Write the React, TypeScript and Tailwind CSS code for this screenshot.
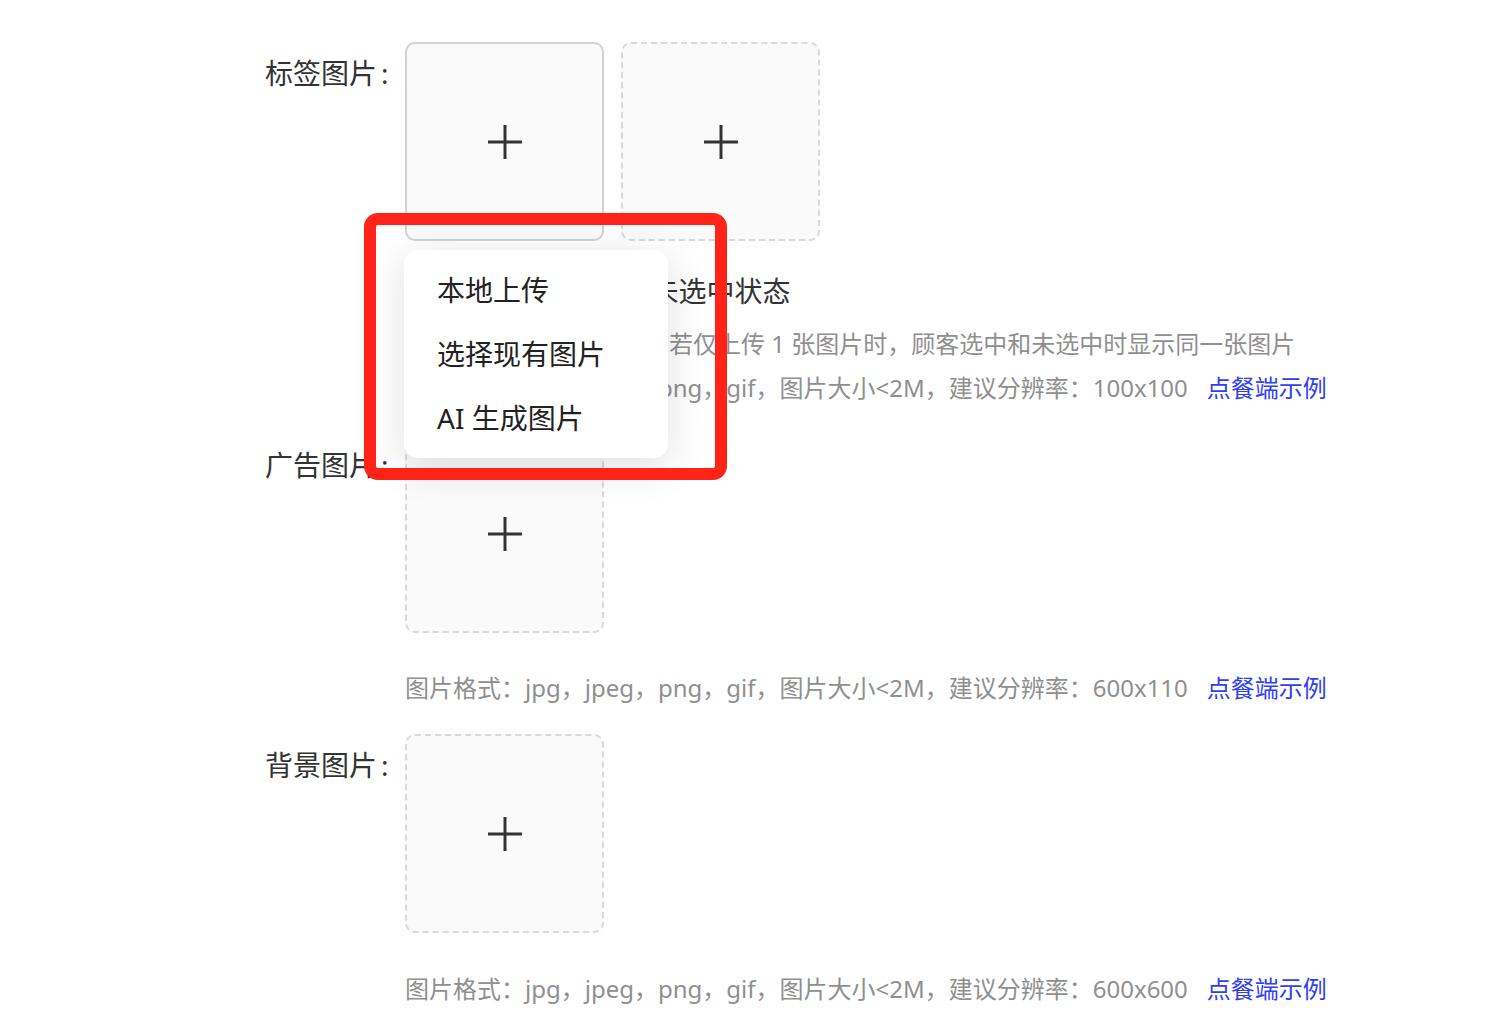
import { useState } from 'react'

const fontStack = "font-['Noto_Sans','Noto_Sans_CJK_SC',sans-serif]"

function PlusIcon() {
  return (
    <svg width="34" height="34" viewBox="0 0 34 34" className="text-[#333]">
      <path d="M17 0v34M0 17h34" stroke="currentColor" strokeWidth="3" />
    </svg>
  )
}

function UploadBox({ dashed = true }: { dashed?: boolean }) {
  return (
    <div
      className={
        dashed
          ? 'w-[199px] h-[199px] rounded-[10px] border-2 border-dashed border-[#d9d9d9] bg-[#fafafa] flex items-center justify-center'
          : 'w-[199px] h-[199px] rounded-[10px] border-2 border-solid border-[#d2d2d2] bg-[#fafafa] flex items-center justify-center'
      }
    >
      <PlusIcon />
    </div>
  )
}

function Hint({ size }: { size: string }) {
  return (
    <p className="text-[24px] leading-[44px] text-[#8f8f8f] whitespace-nowrap">
      图片格式：jpg，jpeg，png，gif，图片大小&lt;2M，建议分辨率：{size}
      <a className="ml-[19px] text-[#2f3ff5] cursor-pointer">点餐端示例</a>
    </p>
  )
}

function Label({ text }: { text: string }) {
  return (
    <div className="w-[140px] shrink-0 pt-[17px] text-[28px] leading-[28px] text-[#333] whitespace-nowrap">
      {text}
      <span className="ml-[4px]">:</span>
    </div>
  )
}

export default function App() {
  const [open] = useState(true)

  return (
    <div className={`relative min-h-screen bg-white ${fontStack}`}>
      <div className="pl-[265px] pt-[42px] flex flex-col">
        {/* 标签图片 */}
        <div className="flex">
          <Label text="标签图片" />
          <div className="flex flex-col">
            <div className="flex gap-[17px]">
              <div className="flex flex-col items-center">
                <UploadBox dashed={false} />
                <span className="mt-[36px] text-[28px] leading-[28px] text-[#333]">选中状态</span>
              </div>
              <div className="flex flex-col items-center">
                <UploadBox />
                <span className="mt-[36px] text-[28px] leading-[28px] text-[#333]">未选中状态</span>
              </div>
            </div>
            <p className="mt-[17px] text-[24px] leading-[44px] text-[#8f8f8f] whitespace-nowrap">
              建议上传两种状态图片，若仅上传 1 张图片时，顾客选中和未选中时显示同一张图片
            </p>
            <Hint size="100x100" />
          </div>
        </div>

        {/* 广告图片 */}
        <div className="flex mt-[24px]">
          <Label text="广告图片" />
          <div className="flex flex-col">
            <UploadBox />
            <div className="mt-[33px]">
              <Hint size="600x110" />
            </div>
          </div>
        </div>

        {/* 背景图片 */}
        <div className="flex mt-[24px]">
          <Label text="背景图片" />
          <div className="flex flex-col">
            <UploadBox />
            <div className="mt-[34px]">
              <Hint size="600x600" />
            </div>
          </div>
        </div>
      </div>

      {/* upload menu */}
      {open && (
        <div className="absolute left-[404px] top-[250px] w-[264px] py-[8px] rounded-[14px] bg-white shadow-[0_8px_40px_rgba(0,0,0,0.13)]">
          {['本地上传', '选择现有图片', 'AI 生成图片'].map((item) => (
            <div key={item} className="h-[64px] px-[33px] flex items-center text-[28px] text-[#222] whitespace-nowrap">
              {item}
            </div>
          ))}
        </div>
      )}

      {/* annotation frame */}
      <div className="absolute left-[364px] top-[213px] w-[363px] h-[267px] rounded-[14px] border-[12px] border-[#ff2318] pointer-events-none" />
    </div>
  )
}
